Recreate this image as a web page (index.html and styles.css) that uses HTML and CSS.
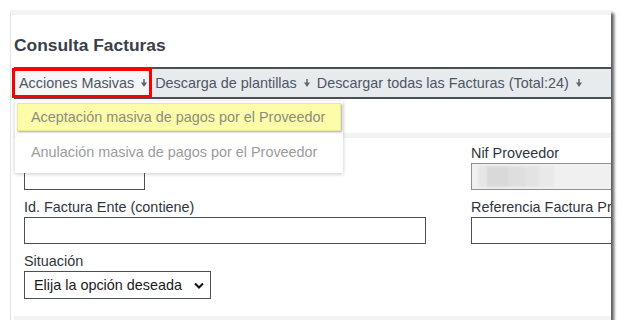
FILE: index.html
```html
<!DOCTYPE html>
<html lang="es">
<head>
    <meta charset="UTF-8">
    <meta name="viewport" content="width=device-width, initial-scale=1.0">
    <title>Consulta Facturas</title>
    <link rel="stylesheet" href="styles.css">
</head>
<body>
    <div class="shot">
        <h1 class="title">Consulta Facturas</h1>

        <div class="menu-bar">
            <div class="menu-item active">
                <span>Acciones Masivas</span>
                <svg class="arrow" width="6" height="8" viewBox="0 0 6 8"><path d="M2.25 0h1.5v3.6H6L3 8 0 3.6h2.25z" fill="#5f6570"/></svg>
                <ul class="dropdown">
                    <li class="hover">Aceptación masiva de pagos por el Proveedor</li>
                    <li>Anulación masiva de pagos por el Proveedor</li>
                </ul>
            </div>
            <div class="menu-item">
                <span>Descarga de plantillas</span>
                <svg class="arrow" width="6" height="8" viewBox="0 0 6 8"><path d="M2.25 0h1.5v3.6H6L3 8 0 3.6h2.25z" fill="#5f6570"/></svg>
            </div>
            <div class="menu-item">
                <span>Descargar todas las Facturas (Total:24)</span>
                <svg class="arrow" width="6" height="8" viewBox="0 0 6 8"><path d="M2.25 0h1.5v3.6H6L3 8 0 3.6h2.25z" fill="#5f6570"/></svg>
            </div>
        </div>

        <div class="toolbar"></div>

        <form class="filters">
            <div class="field">
                <label>Nº Registro</label>
                <input type="text" class="short">
            </div>
            <div class="field">
                <label>Nif Proveedor</label>
                <div class="masked-wrap">
                    <input type="text" class="wide" disabled>
                    <span class="masked"></span>
                </div>
            </div>
            <div class="field">
                <label>Id. Factura Ente (contiene)</label>
                <input type="text" class="long">
            </div>
            <div class="field">
                <label>Referencia Factura Proveedor</label>
                <input type="text" class="wide">
            </div>
            <div class="field">
                <label>Situación</label>
                <div class="select">
                    <span>Elija la opción deseada</span>
                    <svg width="10" height="7" viewBox="0 0 10 7"><path d="M1 1.5l4 4 4-4" fill="none" stroke="#111" stroke-width="2"/></svg>
                </div>
            </div>
        </form>
    </div>
</body>
</html>
```

FILE: styles.css
```css
body {
    margin: 0;
    background-color: #ffffff;
    font-family: "Liberation Sans", Arial, sans-serif;
    font-size: 14.4px;
}

.shot {
    position: relative;
    box-sizing: border-box;
    width: 601px;
    height: 310px;
    margin: 10px 0 0 10px;
    border-top: 5px solid #f3f3f3;
    border-left: 1px solid #e4e4e4;
    background-color: #ffffff;
    box-shadow: 3px 3px 3px rgba(0, 0, 0, 0.65);
    overflow: hidden;
}

.title {
    margin: 20px 0 12px 3px;
    font-size: 17.4px;
    line-height: 20px;
    font-weight: bold;
    color: #3a404a;
}

.menu-bar {
    display: flex;
    margin-left: 3px;
    width: 700px;
    height: 28px;
    border-top: 2px solid #4b5058;
    border-bottom: 2px solid #4b5058;
    background-color: #e8ebee;
}

.menu-item {
    position: relative;
    display: flex;
    align-items: center;
    padding: 0 2px 0 5px;
    line-height: 28px;
    color: #4e5563;
    white-space: nowrap;
}

.menu-item .arrow {
    margin-left: 7px;
}

.menu-item.active {
    padding-right: 3px;
    background-color: #f5f6f8;
}

.menu-item.active::after {
    content: "";
    position: absolute;
    top: -1px;
    bottom: -1px;
    left: -2px;
    right: -2px;
    border: 3px solid #ff0000;
    pointer-events: none;
}

.dropdown {
    position: absolute;
    top: 32px;
    left: 1px;
    z-index: 2;
    width: 328px;
    box-sizing: border-box;
    margin: 0;
    padding: 2px 2px 7px;
    list-style: none;
    background-color: #ffffff;
    box-shadow: 0 1px 4px rgba(0, 0, 0, 0.22);
}

.dropdown li {
    height: 28px;
    line-height: 28px;
    padding-left: 14px;
    color: #9c9c9c;
    white-space: nowrap;
}

.dropdown li + li {
    margin-top: 7px;
}

.dropdown li.hover {
    box-sizing: border-box;
    padding-left: 13px;
    line-height: 26px;
    border: 1px solid #e9e89c;
    background-color: #fdfca9;
    color: #8c8c84;
    box-shadow: 1px 1px 2px rgba(0, 0, 0, 0.35);
}

.toolbar {
    height: 34px;
}

.filters {
    display: grid;
    grid-template-columns: 447px 1fr;
    align-content: start;
    margin: 0 0 0 3px;
    padding: 7px 0 8px 10px;
    border-top: 5px solid #f3f3f3;
    border-bottom: 12px solid #f3f3f3;
}

.field {
    margin-bottom: 9px;
}

.field label {
    display: block;
    margin-bottom: 2px;
    line-height: 16px;
    color: #2f3540;
    white-space: nowrap;
}

.field input {
    display: block;
    box-sizing: border-box;
    height: 27px;
    margin: 0;
    border: 1px solid #4b5058;
    background-color: #ffffff;
    font: inherit;
}

.field input.short {
    width: 121px;
}

.field input.long {
    width: 402px;
}

.field input.wide {
    width: 200px;
}

.field input:disabled {
    border-color: #8e9196;
    background-color: #f0f0f0;
}

.masked-wrap {
    position: relative;
}

.masked {
    position: absolute;
    top: 3px;
    left: 7px;
    width: 76px;
    height: 21px;
    background: linear-gradient(90deg, #e6e6e6 0 12%, #d9d9d9 12% 40%, #dedede 40% 62%, #e3e3e3 62% 80%, #e9e9e9 80%);
    filter: blur(1px);
}

.select {
    display: flex;
    align-items: center;
    justify-content: space-between;
    box-sizing: border-box;
    width: 187px;
    height: 28px;
    margin-top: 1px;
    padding: 0 6px 0 9px;
    border: 1px solid #4b5058;
    color: #1a1a1a;
}
```
